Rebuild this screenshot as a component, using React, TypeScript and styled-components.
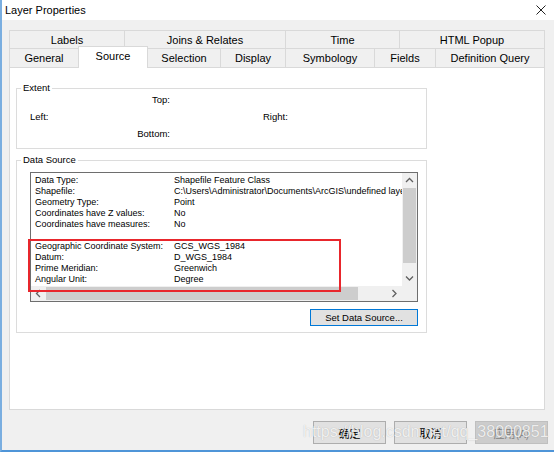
import React from 'react';
import styled, { createGlobalStyle } from 'styled-components';

const GlobalStyle = createGlobalStyle`
  html, body { margin: 0; padding: 0; background: #f0f0f0; }
  body { font-family: "Liberation Sans", Arial, "Noto Sans CJK SC", sans-serif; color: #000; }
  * { box-sizing: border-box; }
`;

const Window = styled.div`
  position: relative;
  width: 554px;
  height: 452px;
  background: #f0f0f0;
  border-left: 2px solid #7aaee0;
  border-bottom: 2px solid #4f95d8;
  display: flex;
  flex-direction: column;
  overflow: hidden;
`;

const TitleBar = styled.div`
  height: 20px;
  flex: none;
  background: #fff;
  display: flex;
  align-items: center;
  justify-content: space-between;
  padding: 0 8px 0 3px;
  font-size: 11px;
`;

const TabsArea = styled.div`
  margin: 10px 9px 0 7px;
  display: flex;
  flex-direction: column;
`;

const TabRow = styled.div<{ $h: number }>`
  display: flex;
  height: ${(p) => p.$h}px;
`;

const Tab = styled.div<{ $w: number; $selected?: boolean }>`
  width: ${(p) => p.$w}px;
  flex: none;
  display: flex;
  align-items: center;
  justify-content: center;
  font-size: 11px;
  background: ${(p) => (p.$selected ? '#fff' : '#f0f0f0')};
  border-top: 1px solid #d9d9d9;
  border-left: 1px solid #d9d9d9;
  &:last-child { border-right: 1px solid #d9d9d9; }
  ${(p) =>
    p.$selected &&
    `
    position: relative;
    z-index: 1;
    height: 22px;
    margin-top: -2px;
    margin-bottom: -1px;
    margin-right: -1px;
    width: ${p.$w + 1}px;
    border-right: 1px solid #d9d9d9;
    padding-bottom: 3px;
  `}
`;

const Panel = styled.div`
  height: 343px;
  margin: 0 9px 0 7px;
  background: #fff;
  border: 1px solid #d9d9d9;
  padding: 14px 6px 0 6px;
`;

const Group = styled.fieldset<{ $gap?: number }>`
  width: 411px;
  margin: ${(p) => p.$gap ?? 0}px 0 0 0;
  padding: 0;
  border: 1px solid #dcdcdc;
  min-width: 0;
`;

const Legend = styled.legend`
  padding: 0 2px;
  margin-left: 4px;
  font-size: 9.5px;
  line-height: 12px;
`;

const ExtentGrid = styled.div`
  margin-top: -3px;
  padding: 0 0 6px 13px;
  display: grid;
  grid-template-columns: 140px 93px 1fr;
  grid-auto-rows: 17px;
  font-size: 9.5px;
  line-height: 17px;
`;

const ExtentLabel = styled.div<{ $col: number; $row: number; $end?: boolean }>`
  grid-column: ${(p) => p.$col};
  grid-row: ${(p) => p.$row};
  justify-self: ${(p) => (p.$end ? 'end' : 'start')};
`;

const SourceBody = styled.div`
  padding: 6px 8px 6px 13px;
  display: flex;
  flex-direction: column;
  align-items: flex-end;
`;

const ListBox = styled.div`
  width: 388px;
  height: 130px;
  border: 1px solid #6e6e6e;
  display: grid;
  grid-template-columns: 1fr 15px;
  grid-template-rows: 1fr 15px;
  background: #fff;
`;

const ListContent = styled.div`
  overflow: hidden;
  padding: 2px 0 0 4px;
  font-size: 9px;
  line-height: 11px;
`;

const ListRow = styled.div`
  display: grid;
  grid-template-columns: 139px auto;
  white-space: nowrap;
  height: 11px;
`;

const BlankRow = styled.div`
  height: 11px;
`;

const VScroll = styled.div`
  background: #f0f0f0;
  display: flex;
  flex-direction: column;
`;

const HScroll = styled.div`
  background: #f0f0f0;
  display: flex;
`;

const ScrollArrow = styled.div`
  width: 15px;
  height: 15px;
  flex: none;
  display: flex;
  align-items: center;
  justify-content: center;
`;

const VThumb = styled.div`
  height: 75px;
  margin: 0 1px;
  background: #cdcdcd;
  flex: none;
`;

const HThumb = styled.div`
  width: 312px;
  margin: 1px 0;
  background: #cdcdcd;
  flex: none;
`;

const Track = styled.div`
  flex: 1;
`;

const Corner = styled.div`
  background: #f0f0f0;
`;

const SetButton = styled.button`
  margin-top: 7px;
  width: 108px;
  height: 17px;
  padding: 0;
  background: #e1e1e1;
  border: 1px solid #0078d7;
  font-family: inherit;
  font-size: 9.5px;
  color: #000;
`;

const BottomBar = styled.div`
  display: flex;
  justify-content: flex-end;
  gap: 8px;
  margin-top: 11px;
  padding-right: 6px;
`;

const DialogButton = styled.button<{ $disabled?: boolean }>`
  width: 73px;
  height: 23px;
  padding: 0;
  font-family: "Noto Sans CJK SC", "Liberation Sans", sans-serif;
  font-size: 11px;
  background: ${(p) => (p.$disabled ? '#cccccc' : '#e1e1e1')};
  border: 1px solid ${(p) => (p.$disabled ? '#bfbfbf' : '#adadad')};
  color: ${(p) => (p.$disabled ? '#838383' : '#000')};
`;

const Annotation = styled.div`
  position: absolute;
  left: 26px;
  top: 239px;
  width: 313px;
  height: 53px;
  border: 2px solid #e8262c;
  pointer-events: none;
`;

const Watermark = styled.div`
  position: absolute;
  left: 301px;
  top: 423px;
  font-family: "Liberation Sans", Arial, sans-serif;
  font-size: 16px;
  line-height: 18px;
  white-space: nowrap;
  color: rgba(255, 255, 255, 0.82);
  text-shadow: 0 0 1px rgba(0, 0, 0, 0.25);
  pointer-events: none;
`;

const Chevron = ({ dir }: { dir: 'up' | 'down' | 'left' | 'right' }) => {
  const pts = {
    up: '1,5 4.5,1.5 8,5',
    down: '1,1.5 4.5,5 8,1.5',
    left: '5,1 1.5,4.5 5,8',
    right: '1.5,1 5,4.5 1.5,8',
  }[dir];
  const vertical = dir === 'up' || dir === 'down';
  return (
    <svg width={vertical ? 9 : 7} height={vertical ? 7 : 9} viewBox={vertical ? '0 0 9 7' : '0 0 7 9'}>
      <polyline points={pts} fill="none" stroke="#606060" strokeWidth="1.3" />
    </svg>
  );
};

const row1 = [
  { label: 'Labels', w: 115 },
  { label: 'Joins & Relates', w: 161 },
  { label: 'Time', w: 114 },
  { label: 'HTML Popup', w: 146 },
];

const row2 = [
  { label: 'General', w: 69 },
  { label: 'Source', w: 69, selected: true },
  { label: 'Selection', w: 73 },
  { label: 'Display', w: 65 },
  { label: 'Symbology', w: 89 },
  { label: 'Fields', w: 61 },
  { label: 'Definition Query', w: 110 },
];

const info1 = [
  ['Data Type:', 'Shapefile Feature Class'],
  ['Shapefile:', 'C:\\Users\\Administrator\\Documents\\ArcGIS\\undefined layer.shp'],
  ['Geometry Type:', 'Point'],
  ['Coordinates have Z values:', 'No'],
  ['Coordinates have measures:', 'No'],
];

const info2 = [
  ['Geographic Coordinate System:', 'GCS_WGS_1984'],
  ['Datum:', 'D_WGS_1984'],
  ['Prime Meridian:', 'Greenwich'],
  ['Angular Unit:', 'Degree'],
];

export default function App() {
  return (
    <>
      <GlobalStyle />
      <Window>
        <TitleBar>
          <span>Layer Properties</span>
          <svg width="10" height="10" viewBox="0 0 10 10">
            <path d="M0.5 0.5 L9.5 9.5 M9.5 0.5 L0.5 9.5" stroke="#222" strokeWidth="1" />
          </svg>
        </TitleBar>
        <TabsArea>
          <TabRow $h={18}>
            {row1.map((t) => (
              <Tab key={t.label} $w={t.w}>
                {t.label}
              </Tab>
            ))}
          </TabRow>
          <TabRow $h={19}>
            {row2.map((t) => (
              <Tab key={t.label} $w={t.w} $selected={t.selected}>
                {t.label}
              </Tab>
            ))}
          </TabRow>
        </TabsArea>
        <Panel>
          <Group>
            <Legend>Extent</Legend>
            <ExtentGrid>
              <ExtentLabel $col={1} $row={1} $end>Top:</ExtentLabel>
              <ExtentLabel $col={1} $row={2}>Left:</ExtentLabel>
              <ExtentLabel $col={3} $row={2}>Right:</ExtentLabel>
              <ExtentLabel $col={1} $row={3} $end>Bottom:</ExtentLabel>
            </ExtentGrid>
          </Group>
          <Group $gap={5}>
            <Legend>Data Source</Legend>
            <SourceBody>
              <ListBox>
                <ListContent>
                  {info1.map(([k, v]) => (
                    <ListRow key={k}>
                      <span>{k}</span>
                      <span>{v}</span>
                    </ListRow>
                  ))}
                  <BlankRow />
                  {info2.map(([k, v]) => (
                    <ListRow key={k}>
                      <span>{k}</span>
                      <span>{v}</span>
                    </ListRow>
                  ))}
                </ListContent>
                <VScroll>
                  <ScrollArrow><Chevron dir="up" /></ScrollArrow>
                  <VThumb />
                  <Track />
                  <ScrollArrow><Chevron dir="down" /></ScrollArrow>
                </VScroll>
                <HScroll>
                  <ScrollArrow><Chevron dir="left" /></ScrollArrow>
                  <HThumb />
                  <Track />
                  <ScrollArrow><Chevron dir="right" /></ScrollArrow>
                </HScroll>
                <Corner />
              </ListBox>
              <SetButton>Set Data Source...</SetButton>
            </SourceBody>
          </Group>
        </Panel>
        <BottomBar>
          <DialogButton>确定</DialogButton>
          <DialogButton>取消</DialogButton>
          <DialogButton $disabled>应用(A)</DialogButton>
        </BottomBar>
        <Annotation />
        <Watermark>https://blog.csdn.net/qq_38000851</Watermark>
      </Window>
    </>
  );
}
